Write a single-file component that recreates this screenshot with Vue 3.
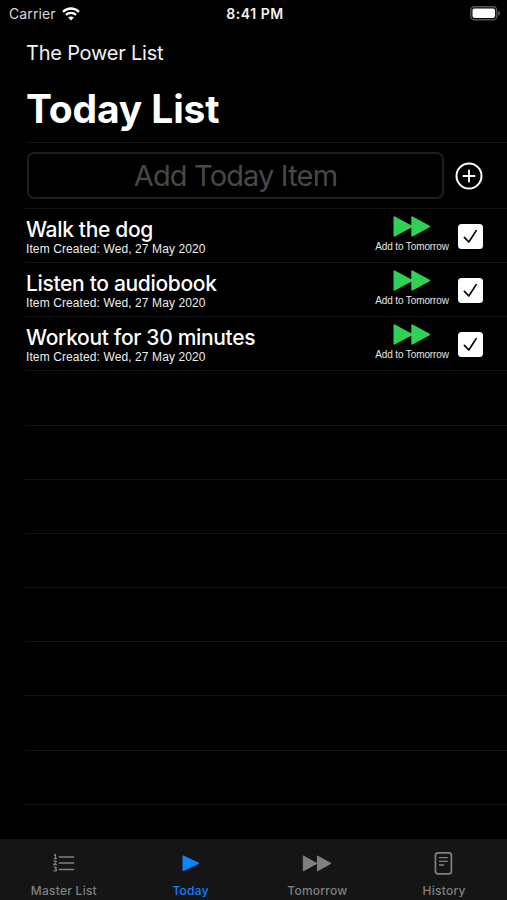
<template>
  <div class="phone">
    <header class="status-bar">
      <div class="carrier">
        <span>Carrier</span>
        <svg class="wifi" viewBox="0 0 18 14">
          <path d="M1 4.8C5.6 .4 12.4 .4 17 4.8" />
          <path d="M3.9 7.8c2.9-2.7 7.3-2.7 10.2 0" />
          <path class="dot" d="M9 13.4L6.2 10.6c1.6-1.4 4-1.4 5.6 0z" />
        </svg>
      </div>
      <div class="clock">8:41 PM</div>
      <div class="power">
        <svg class="battery" viewBox="0 0 31 15">
          <rect class="shell" x=".8" y=".8" width="26" height="13" rx="3.6" />
          <rect class="charge" x="2.5" y="2.5" width="22.6" height="9.6" rx="2" />
          <path class="cap" d="M28.3 5v4.6c2.2-.8 2.2-3.8 0-4.6z" />
        </svg>
      </div>
    </header>

    <div class="nav-title">The Power List</div>
    <h1>Today List</h1>

    <div class="add-row">
      <input v-model="newItem" type="text" placeholder="Add Today Item" />
      <button class="add-button" aria-label="Add" @click="addItem">
        <svg viewBox="0 0 28 28">
          <circle cx="14" cy="14" r="12.5" />
          <path d="M14 8.5v11M8.5 14h11" />
        </svg>
      </button>
    </div>

    <ul class="list">
      <li v-for="item in items" :key="item.id">
        <div class="info">
          <div class="name">{{ item.name }}</div>
          <div class="created">Item Created: {{ item.created }}</div>
        </div>
        <button class="move" @click="removeItem(item.id)">
          <svg viewBox="0 0 38 21">
            <path d="M1.4 1.2v18.6L18.6 10.5zM19.2 1.2v18.6L36.2 10.5z" />
          </svg>
          <span>Add to Tomorrow</span>
        </button>
        <button class="check" aria-label="Done" @click="removeItem(item.id)">
          <svg viewBox="0 0 25 25">
            <path d="M6.4 13.4l4.4 4.6L18.2 6.6" />
          </svg>
        </button>
      </li>
      <li v-for="n in emptyRows" :key="'empty' + n"></li>
    </ul>

    <nav class="tab-bar">
      <a
        v-for="tab in tabs"
        :key="tab.id"
        :class="{ active: tab.id === currentTab }"
        @click="currentTab = tab.id"
      >
        <svg v-if="tab.id === 'master'" viewBox="0 0 30 26">
          <path class="line" d="M9.8 6.9h15.4M9.8 13.1h15.4M9.8 19.4h15.4" />
          <path
            class="digit"
            d="M5 5.4l1.5-.9v4.2M4.8 8.7h3.2M4.9 11.5c.6-1 2.6-.7 2.3.5L4.9 14.7h3M4.9 17.5c.8-.8 2.6-.4 2.4.5-.1.7-.9.8-1.5.8 1 0 1.8.3 1.8 1.1 0 1.3-2.2 1.5-2.9.5"
          />
        </svg>
        <svg v-else-if="tab.id === 'today'" viewBox="0 0 30 26">
          <path class="fill" d="M7 5.8v15L23 13.3z" />
        </svg>
        <svg v-else-if="tab.id === 'tomorrow'" viewBox="0 0 30 26">
          <path class="fill" d="M1.3 5.9v15L14.8 13.4zM15.4 5.9v15L28.9 13.4z" />
        </svg>
        <svg v-else viewBox="0 0 30 26">
          <rect class="outline" x="6.4" y="2.9" width="16" height="21" rx="2.6" />
          <path class="text-line" d="M10 7.6h8.8M10 11.3h8.8M10 15h5" />
        </svg>
        <span>{{ tab.label }}</span>
      </a>
    </nav>
  </div>
</template>

<script setup>
import { ref, computed } from 'vue'

const totalRows = 12
const newItem = ref('')
const currentTab = ref('today')

const items = ref([
  { id: 1, name: 'Walk the dog', created: 'Wed, 27 May 2020' },
  { id: 2, name: 'Listen to audiobook', created: 'Wed, 27 May 2020' },
  { id: 3, name: 'Workout for 30 minutes', created: 'Wed, 27 May 2020' }
])

const tabs = [
  { id: 'master', label: 'Master List' },
  { id: 'today', label: 'Today' },
  { id: 'tomorrow', label: 'Tomorrow' },
  { id: 'history', label: 'History' }
]

const emptyRows = computed(() => Math.max(0, totalRows - items.value.length))

function addItem() {
  const name = newItem.value.trim()
  if (!name) return
  items.value.push({ id: Date.now(), name, created: 'Wed, 27 May 2020' })
  newItem.value = ''
}

function removeItem(id) {
  items.value = items.value.filter(item => item.id !== id)
}
</script>

<style>
body {
  background: #000;
}
</style>

<style scoped>
.phone {
  display: flex;
  flex-direction: column;
  width: 507px;
  height: 900px;
  overflow: hidden;
  background: #000;
  color: #fff;
  font-family: Inter, 'Liberation Sans', sans-serif;
}

button {
  padding: 0;
  border: none;
  background: none;
  color: inherit;
}

svg {
  display: block;
  fill: none;
}

.status-bar {
  display: grid;
  grid-template-columns: 1fr auto 1fr;
  align-items: center;
  flex: none;
  height: 27px;
  padding: 0 6px 0 9px;
  font-size: 14px;
}

.carrier {
  display: flex;
  align-items: center;
  gap: 6px;
  color: #d8d8d8;
  letter-spacing: 0.1px;
}

.wifi {
  width: 18px;
  height: 14px;
  stroke: #fff;
  stroke-width: 2.3;
}

.wifi .dot {
  fill: #fff;
  stroke: none;
}

.clock {
  font-size: 14px;
  font-weight: 600;
  letter-spacing: 0.55px;
  color: #f0f0f0;
}

.power {
  display: flex;
  justify-content: flex-end;
}

.battery {
  width: 31px;
  height: 15px;
}

.shell {
  stroke: #555;
  stroke-width: 1.4;
}

.charge {
  fill: #fff;
}

.cap {
  fill: #666;
}

.nav-title {
  flex: none;
  height: 52px;
  padding-left: 26px;
  font-size: 20px;
  line-height: 52px;
  letter-spacing: -0.22px;
  color: #f2f2f2;
}

h1 {
  flex: none;
  height: 63px;
  margin: 0;
  padding-left: 26px;
  font-size: 39px;
  font-weight: 700;
  line-height: 59px;
  letter-spacing: -0.15px;
}

.add-row {
  display: flex;
  align-items: center;
  flex: none;
  box-sizing: border-box;
  height: 66px;
  margin-left: 26px;
  padding-left: 1px;
  border-top: 1px solid #141414;
}

.add-row input {
  box-sizing: border-box;
  width: 417px;
  height: 47px;
  padding: 0;
  border: 2px solid #1e1e1e;
  border-radius: 7px;
  outline: none;
  background: #000;
  color: #fff;
  font-family: inherit;
  font-size: 29px;
  letter-spacing: -0.85px;
  text-align: center;
}

.add-row input::placeholder {
  color: #484848;
  opacity: 1;
}

.add-button {
  margin-left: 11px;
}

.add-button svg {
  width: 28px;
  height: 28px;
  stroke: #fff;
  stroke-width: 2;
  stroke-linecap: round;
}

.list {
  flex: 1;
  min-height: 0;
  margin: 0;
  padding: 0 0 0 25px;
  overflow: hidden;
  list-style: none;
}

.list li {
  display: flex;
  box-sizing: border-box;
  height: 54.17px;
  padding-left: 1px;
  border-top: 1px solid #141414;
}

.info {
  flex: 1;
}

.name {
  padding-top: 8px;
  font-size: 21px;
  font-weight: 500;
  line-height: 25px;
  letter-spacing: -0.33px;
  white-space: nowrap;
}

.created {
  font-family: 'Liberation Sans', Arial, sans-serif;
  font-size: 12px;
  line-height: 15px;
  letter-spacing: 0.1px;
  color: #eee;
}

.move {
  display: flex;
  flex-direction: column;
  align-items: center;
  width: 76px;
  padding-top: 7px;
}

.move svg {
  width: 38px;
  height: 21px;
  fill: #30d158;
  stroke: #30d158;
  stroke-width: 1.8;
  stroke-linejoin: round;
}

.move span {
  margin-top: 4px;
  font-family: 'Liberation Sans', Arial, sans-serif;
  font-size: 10px;
  line-height: 12px;
  letter-spacing: -0.12px;
  color: #e4e4e4;
  white-space: nowrap;
}

.check {
  width: 25px;
  height: 25px;
  margin: 15px 24px 0 8px;
  border-radius: 3.5px;
  background: #fff;
}

.check svg {
  width: 25px;
  height: 25px;
  stroke: #000;
  stroke-width: 1.7;
  stroke-linecap: round;
  stroke-linejoin: round;
}

.tab-bar {
  display: flex;
  flex: none;
  height: 61px;
  background: #151515;
  color: #808080;
}

.tab-bar a {
  display: flex;
  flex: 1;
  flex-direction: column;
  align-items: center;
  padding: 11px 0 0 1px;
  font-size: 12px;
  font-weight: 500;
}

.tab-bar a.active {
  color: #0a84ff;
}

.tab-bar svg {
  width: 30px;
  height: 26px;
  stroke: currentColor;
}

.tab-bar .fill {
  fill: currentColor;
  stroke-linejoin: round;
}

.tab-bar .line {
  stroke-width: 1.5;
}

.tab-bar .digit {
  stroke-width: 1.2;
}

.tab-bar .outline {
  stroke-width: 1.7;
}

.tab-bar .text-line {
  stroke-width: 1.3;
}

.tab-bar span {
  margin-top: 7px;
  line-height: 15px;
  letter-spacing: 0.25px;
}
</style>
